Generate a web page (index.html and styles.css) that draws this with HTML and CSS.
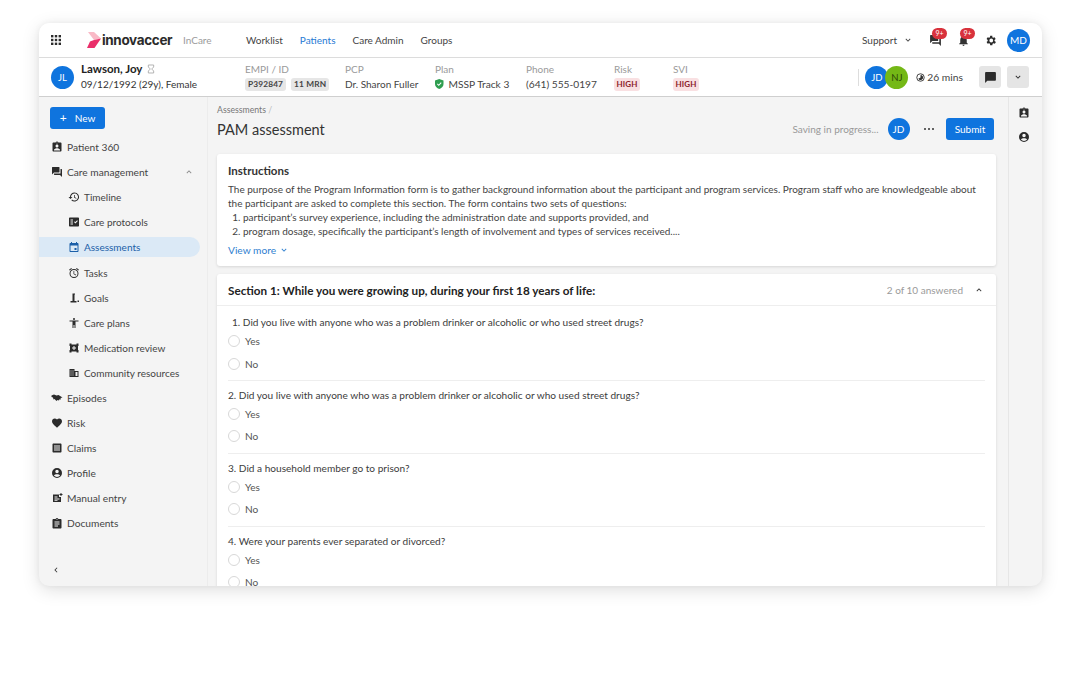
FILE: index.html
```html
<!DOCTYPE html>
<html lang="en">
<head>
<meta charset="utf-8">
<title>PAM assessment</title>
<link rel="stylesheet" href="styles.css">
</head>
<body>
<svg class="defs" width="0" height="0" aria-hidden="true">
  <symbol id="i-badge" viewBox="0 0 24 24"><path d="M19 3h-4.180C14.400 1.840 13.300 1 12 1c-1.300 0-2.400.84-2.820 2H5c-1.100 0-2 .9-2 2v14c0 1.100.9 2 2 2h14c1.100 0 2-.9 2-2V5c0-1.100-.9-2-2-2zm-7 0c.55 0 1 .45 1 1s-.45 1-1 1-1-.45-1-1 .45-1 1-1zm0 4c1.660 0 3 1.340 3 3s-1.340 3-3 3-3-1.340-3-3 1.340-3 3-3zm6 12H6v-1.400c0-2 4-3.100 6-3.100s6 1.100 6 3.100V19z"/></symbol>
  <symbol id="i-chat" viewBox="0 0 24 24"><path d="M21 6h-2v9H6v2c0 .6.4 1 1 1h11l4 4V7c0-.6-.4-1-1-1zm-4 6V3c0-.6-.4-1-1-1H3c-.6 0-1 .4-1 1v14l4-4h10c.6 0 1-.4 1-1z"/></symbol>
  <symbol id="i-comment" viewBox="0 0 24 24"><path d="M20 2H4c-1.100 0-2 .9-2 2v18l4-4h14c1.100 0 2-.9 2-2V4c0-1.100-.9-2-2-2z"/></symbol>
  <symbol id="i-history" viewBox="0 0 24 24"><path d="M13 3a9 9 0 0 0-9 9H1l3.900 3.900L9 12H6a7 7 0 1 1 2.050 4.950l-1.420 1.420A9 9 0 1 0 13 3zm-1 5v5l4.300 2.500.7-1.200-3.500-2.100V8H12z"/></symbol>
  <symbol id="i-protocol" viewBox="0 0 24 24"><path d="M20 3H4c-1.100 0-2 .9-2 2v14c0 1.100.9 2 2 2h16c1.100 0 2-.9 2-2V5c0-1.100-.9-2-2-2zM10 17H5v-2h5v2zm0-4H5v-2h5v2zm0-4H5V7h5v2zm4.800 6L12 12.200l1.400-1.400 1.400 1.400 3.500-3.500 1.400 1.400-4.900 4.900z"/></symbol>
  <symbol id="i-cal" viewBox="0 0 24 24"><path d="M19 4h-1V2h-2v2H8V2H6v2H5c-1.100 0-2 .9-2 2v14c0 1.100.9 2 2 2h14c1.100 0 2-.9 2-2V6c0-1.100-.9-2-2-2zm0 16H5V9h14v11zm-6-6h4v4h-4v-4z"/></symbol>
  <symbol id="i-alarm" viewBox="0 0 24 24"><path d="M22 5.700l-4.600-3.900-1.300 1.500 4.600 3.900L22 5.700zM7.900 3.400L6.600 1.900 2 5.700l1.300 1.500 4.600-3.800zM12.500 8H11v6l4.700 2.900.8-1.200-4-2.400V8zM12 4a9 9 0 1 0 0 18 9 9 0 0 0 0-18zm0 16a7 7 0 1 1 0-14 7 7 0 0 1 0 14z"/></symbol>
  <symbol id="i-goal" viewBox="0 0 24 24"><path d="M9 3h5v2h-1v13h4v3H5v-3h4V3zM19 17h3v3h-3z"/></symbol>
  <symbol id="i-body" viewBox="0 0 24 24"><path d="M12 2a2 2 0 1 1 0 4 2 2 0 0 1 0-4zm9 7h-6v13h-2v-6h-2v6H9V9H3V7h18v2z"/></symbol>
  <symbol id="i-med" viewBox="0 0 24 24"><path fill-rule="evenodd" d="M3 3h4v2h10V3h4v5h-1v8h1v5h-4v-2H7v2H3v-5h1V8H3zM11 8v3H8v2h3v3h2v-3h3v-2h-3V8z"/></symbol>
  <symbol id="i-build" viewBox="0 0 24 24"><path d="M3 4h10v4h8v12H3V4zm2 3v2h2V7H5zm4 0v2h2V7H9zm-4 4v2h2v-2H5zm4 0v2h2v-2H9zm-4 4v2h2v-2H5zm4 0v2h2v-2H9zm6-5v8h4v-8h-4z"/></symbol>
  <symbol id="i-hands" viewBox="0 0 24 24"><path d="M1 7l5-2 5 2 4-1 8 5-4 1 1 3-3-.5-1 2.500-3-1-2 2-4-4-2 1-1-4-3-1z"/></symbol>
  <symbol id="i-heart" viewBox="0 0 24 24"><path d="M12 21.300l-1.500-1.300C5.400 15.400 2 12.300 2 8.500 2 5.400 4.400 3 7.500 3c1.700 0 3.400.8 4.500 2.100C13.100 3.800 14.800 3 16.500 3 19.600 3 22 5.400 22 8.500c0 3.800-3.400 6.900-8.500 11.500L12 21.300z"/></symbol>
  <symbol id="i-list" viewBox="0 0 24 24"><path d="M19 3H5c-1.100 0-2 .9-2 2v14c0 1.100.9 2 2 2h14c1.100 0 2-.9 2-2V5c0-1.100-.9-2-2-2zM6 7h12v2H6V7zm0 4h12v2H6v-2zm0 4h12v2H6v-2z"/></symbol>
  <symbol id="i-person" viewBox="0 0 24 24"><path d="M12 2a10 10 0 1 0 0 20 10 10 0 0 0 0-20zm0 3.500a3.500 3.500 0 1 1 0 7 3.500 3.500 0 0 1 0-7zm0 14.500a8 8 0 0 1-6.200-3c.7-1.600 4-2.500 6.200-2.500s5.500.9 6.200 2.500A8 8 0 0 1 12 20z"/></symbol>
  <symbol id="i-entry" viewBox="0 0 24 24"><path d="M4 5h12v5h4v10H4V5zm3 4v2h6V9H7zm0 4v2h10v-2H7zm0 3.500V18h6v-1.500H7zM19 2h2v2h2v2h-2v2h-2V6h-2V4h2V2z"/></symbol>
  <symbol id="i-doc" viewBox="0 0 24 24"><path d="M19 4h-4.200a3 3 0 0 0-5.600 0H5c-1.100 0-2 .9-2 2v15c0 1.100.9 2 2 2h14c1.100 0 2-.9 2-2V6c0-1.100-.9-2-2-2zm-7-.5a1 1 0 1 1 0 2 1 1 0 0 1 0-2zM7 9h10v2H7V9zm0 4h10v2H7v-2zm0 4h7v2H7v-2z"/></symbol>
  <symbol id="i-up" viewBox="0 0 24 24"><path d="M12 8l6 6-1.400 1.400L12 10.800l-4.600 4.600L6 14z"/></symbol>
  <symbol id="i-down" viewBox="0 0 24 24"><path d="M12 16l-6-6 1.400-1.400L12 13.200l4.600-4.600L18 10z"/></symbol>
</svg>

<div class="app">
  <header class="topbar">
    <svg class="grid-icon" viewBox="0 0 10 10" aria-hidden="true"><g><rect x="0" y="0" width="2.400" height="2.400"/><rect x="3.800" y="0" width="2.400" height="2.400"/><rect x="7.600" y="0" width="2.400" height="2.400"/><rect x="0" y="3.800" width="2.400" height="2.400"/><rect x="3.800" y="3.800" width="2.400" height="2.400"/><rect x="7.600" y="3.800" width="2.400" height="2.400"/><rect x="0" y="7.600" width="2.400" height="2.400"/><rect x="3.800" y="7.600" width="2.400" height="2.400"/><rect x="7.600" y="7.600" width="2.400" height="2.400"/></g></svg>
    <svg class="logo-mark" viewBox="0 0 14 16" aria-hidden="true"><path fill="#f9b9c6" d="M1 0h6l7 6.500-7 1.500z"/><path fill="#ea2f6a" d="M14 6.500L7.500 16H0l3-6.500 4-1.500z"/></svg>
    <span class="logo-word">innovaccer</span>
    <span class="product">InCare</span>
    <nav class="mainnav">
      <a>Worklist</a><a class="on">Patients</a><a>Care Admin</a><a>Groups</a>
    </nav>
    <div class="top-right">
      <span class="support">Support</span>
      <svg class="ic10 chev-support"><use href="#i-down"/></svg>
      <span class="notif"><svg class="ic13"><use href="#i-chat"/></svg><b class="count">9+</b></span>
      <span class="notif bell"><svg class="ic13" viewBox="0 0 24 24"><path d="M12 22a2 2 0 0 0 2-2h-4a2 2 0 0 0 2 2zm6-6v-5c0-3.100-1.600-5.600-4.500-6.300V4a1.500 1.500 0 0 0-3 0v.7C7.600 5.400 6 7.900 6 11v5l-2 2v1h16v-1l-2-2z"/></svg><b class="count">9+</b></span>
      <svg class="ic13 gear" viewBox="0 0 24 24"><path d="M19.400 13a7.500 7.500 0 0 0 0-2l2.100-1.600-2-3.500-2.500 1a7.500 7.500 0 0 0-1.700-1L15.400 3.300h-4l-.4 2.600a7.500 7.500 0 0 0-1.700 1l-2.500-1-2 3.500L6.900 11a7.500 7.500 0 0 0 0 2l-2.100 1.600 2 3.500 2.500-1a7.500 7.500 0 0 0 1.700 1l.4 2.600h4l.4-2.600a7.500 7.500 0 0 0 1.700-1l2.500 1 2-3.500L19.400 13zM13.400 15.500a3.500 3.500 0 1 1 0-7 3.500 3.500 0 0 1 0 7z"/></svg>
      <span class="avatar blue big">MD</span>
    </div>
  </header>

  <section class="patient">
    <span class="avatar blue pt">JL</span>
    <div class="who">
      <div class="name">Lawson, Joy <svg class="hour" viewBox="0 0 12 14"><path fill="none" stroke="#a8a8a8" stroke-width="1.300" d="M2 1h8v3L7 7l3 3v3H2v-3l3-3-3-3z"/></svg></div>
      <div class="dob">09/12/1992 (29y), Female</div>
    </div>
    <div class="meta m-empi"><span class="lbl">EMPI / ID</span><div class="val"><span class="chip">P392847</span><span class="chip">11 MRN</span></div></div>
    <div class="meta m-pcp"><span class="lbl">PCP</span><div class="val">Dr. Sharon Fuller</div></div>
    <div class="meta m-plan"><span class="lbl">Plan</span><div class="val"><svg class="shield" viewBox="0 0 12 14"><path fill="#2f9e50" d="M6 0l6 2.200V7c0 3.500-2.500 5.800-6 7-3.500-1.200-6-3.500-6-7V2.200z"/><path fill="none" stroke="#fff" stroke-width="1.500" d="M3.300 6.800l2 2 3.500-3.600"/></svg>MSSP Track 3</div></div>
    <div class="meta m-phone"><span class="lbl">Phone</span><div class="val">(641) 555-0197</div></div>
    <div class="meta m-risk"><span class="lbl">Risk</span><div class="val"><span class="chip high">HIGH</span></div></div>
    <div class="meta m-svi"><span class="lbl">SVI</span><div class="val"><span class="chip high">HIGH</span></div></div>
    <div class="pt-right">
      <span class="vline"></span>
      <span class="avatar blue pair">JD</span>
      <span class="avatar green pair second">NJ</span>
      <svg class="timer" viewBox="0 0 12 12"><circle cx="6" cy="6" r="5" fill="none" stroke="#333" stroke-width="1.200"/><path fill="#333" d="M6 2.500a3.500 3.500 0 1 1-3 5.300L6 6z"/></svg>
      <span class="mins">26 mins</span>
      <span class="square-btn first"><svg class="ic13"><use href="#i-comment"/></svg></span>
      <span class="square-btn"><svg class="ic10"><use href="#i-down"/></svg></span>
    </div>
  </section>

  <div class="body">
    <aside class="side">
      <button class="new"><span class="plus">+</span>New</button>
      <ul class="menu">
        <li><svg class="ic12"><use href="#i-badge"/></svg>Patient 360</li>
        <li><svg class="ic12"><use href="#i-chat"/></svg>Care management<svg class="ic10 caret"><use href="#i-up"/></svg></li>
        <li class="sub"><svg class="ic12"><use href="#i-history"/></svg>Timeline</li>
        <li class="sub"><svg class="ic12"><use href="#i-protocol"/></svg>Care protocols</li>
        <li class="sub active"><svg class="ic12"><use href="#i-cal"/></svg>Assessments</li>
        <li class="sub"><svg class="ic12"><use href="#i-alarm"/></svg>Tasks</li>
        <li class="sub"><svg class="ic12"><use href="#i-goal"/></svg>Goals</li>
        <li class="sub"><svg class="ic12"><use href="#i-body"/></svg>Care plans</li>
        <li class="sub"><svg class="ic12"><use href="#i-med"/></svg>Medication review</li>
        <li class="sub"><svg class="ic12"><use href="#i-build"/></svg>Community resources</li>
        <li><svg class="ic12"><use href="#i-hands"/></svg>Episodes</li>
        <li><svg class="ic12"><use href="#i-heart"/></svg>Risk</li>
        <li><svg class="ic12"><use href="#i-list"/></svg>Claims</li>
        <li><svg class="ic12"><use href="#i-person"/></svg>Profile</li>
        <li><svg class="ic12"><use href="#i-entry"/></svg>Manual entry</li>
        <li><svg class="ic12"><use href="#i-doc"/></svg>Documents</li>
      </ul>
      <svg class="ic10 collapse" viewBox="0 0 24 24"><path d="M15.400 7.400L14 6l-6 6 6 6 1.400-1.400L10.800 12z"/></svg>
    </aside>

    <main class="main">
      <div class="crumb">Assessments <span class="slash">/</span></div>
      <div class="title-row">
        <h1>PAM assessment</h1>
        <div class="actions">
          <span class="saving">Saving in progress...</span>
          <span class="avatar blue act">JD</span>
          <span class="dots"><i></i><i></i><i></i></span>
          <button class="submit">Submit</button>
        </div>
      </div>

      <section class="card instr">
        <h2>Instructions</h2>
        <p>The purpose of the Program Information form is to gather background information about the participant and program services. Program staff who are knowledgeable about the participant are asked to complete this section. The form contains two sets of questions:</p>
        <ol>
          <li>participant’s survey experience, including the administration date and supports provided, and</li>
          <li>program dosage, specifically the participant’s length of involvement and types of services received....</li>
        </ol>
        <a class="more">View more <svg class="ic10"><use href="#i-down"/></svg></a>
      </section>

      <section class="card form">
        <div class="sec-head">
          <h3>Section 1: While you were growing up, during your first 18 years of life:</h3>
          <span class="answered">2 of 10 answered</span>
          <svg class="ic10 sec-caret"><use href="#i-up"/></svg>
        </div>
        <div class="q first-q">
          <div class="qt indent">1. Did you live with anyone who was a problem drinker or alcoholic or who used street drugs?</div>
          <label class="opt"><i class="radio"></i>Yes</label>
          <label class="opt"><i class="radio"></i>No</label>
        </div>
        <div class="q">
          <div class="qt">2. Did you live with anyone who was a problem drinker or alcoholic or who used street drugs?</div>
          <label class="opt"><i class="radio"></i>Yes</label>
          <label class="opt"><i class="radio"></i>No</label>
        </div>
        <div class="q">
          <div class="qt">3. Did a household member go to prison?</div>
          <label class="opt"><i class="radio"></i>Yes</label>
          <label class="opt"><i class="radio"></i>No</label>
        </div>
        <div class="q">
          <div class="qt">4. Were your parents ever separated or divorced?</div>
          <label class="opt"><i class="radio"></i>Yes</label>
          <label class="opt"><i class="radio"></i>No</label>
        </div>
      </section>
    </main>

    <aside class="rail">
      <svg class="ic12"><use href="#i-badge"/></svg>
      <svg class="ic12"><use href="#i-person"/></svg>
    </aside>
  </div>
</div>
</body>
</html>
```
FILE: styles.css
```css
* { box-sizing: border-box; }
html, body { margin: 0; height: 100%; background: #fff; overflow: hidden; }
body { padding: 23px 38px 0 39px; font-family: "Lato", "Noto Sans", sans-serif; font-size: 11px; color: #3c3c3c; }
.defs { position: absolute; }
svg { fill: currentColor; flex: none; display: block; }
.ic10 { width: 10px; height: 10px; }
.ic12 { width: 12px; height: 12px; }
.ic13 { width: 13px; height: 13px; }

.app { height: 563px; border-radius: 10px; overflow: hidden; display: flex; flex-direction: column; background: #f4f4f4; box-shadow: 0 4px 18px rgba(0,0,0,.13), 0 0 6px rgba(0,0,0,.05); }

.topbar { height: 35px; background: #fff; border-bottom: 1px solid #dcdcdc; display: flex; align-items: center; padding-left: 12px; flex: none; }
.grid-icon { width: 10px; height: 10px; fill: #2b2b2b; }
.logo-mark { width: 14px; height: 16px; margin-left: 26px; }
.logo-word { font-family: "Inter", sans-serif; font-weight: 700; font-size: 13.500px; letter-spacing: -.35px; color: #2b2b2b; margin-left: 1px; width: 71px; }
.product { margin-left: 10px; color: #9b9b9b; font-size: 10px; width: 52px; }
.mainnav { display: flex; gap: 17px; font-size: 10px; margin-left: 11px; }
.mainnav a { color: #444; }
.mainnav .on { color: #1f7ad4; }
.top-right { margin-left: auto; display: flex; align-items: center; padding-right: 12px; }
.support { font-size: 10px; color: #444; }
.chev-support { margin-left: 6px; color: #444; }
.notif { position: relative; margin-left: 16px; color: #333; }
.notif.bell { margin-left: 15px; }
.count { position: absolute; left: 3px; top: -6px; min-width: 15px; height: 11px; padding: 0 2px; border-radius: 6px; background: #d8323c; color: #fff; font-size: 7px; font-weight: 400; line-height: 11px; text-align: center; }
.gear { margin-left: 14px; color: #2b2b2b; }
.avatar { border-radius: 50%; display: inline-flex; align-items: center; justify-content: center; color: #fff; flex: none; }
.blue { background: #0f74de; }
.green { background: #74b816; color: #2d4a08; }
.big { width: 23px; height: 23px; margin-left: 10px; font-size: 10px; }

.patient { height: 39px; background: #fff; border-bottom: 1px solid #cfcfcf; display: flex; align-items: center; padding-left: 12px; flex: none; position: relative; }
.pt { width: 23px; height: 23px; font-size: 9.500px; }
.who { margin-left: 7px; width: 164px; }
.name { font-size: 11.500px; font-weight: 700; color: #222; display: flex; align-items: center; gap: 5px; line-height: 14px; }
.hour { width: 8px; height: 10px; }
.dob { font-size: 10px; color: #333; line-height: 15px; margin-top: 1px; }
.meta { display: flex; flex-direction: column; gap: 1px; }
.lbl { font-size: 10px; color: #9a9a9a; line-height: 13px; }
.val { font-size: 10px; color: #444; display: flex; align-items: center; gap: 5px; height: 14px; }
.m-empi { width: 100px; }
.m-pcp { width: 90px; }
.m-plan { width: 91px; }
.m-plan .val, .m-phone .val { font-size: 10.200px; }
.m-phone { width: 88px; }
.m-risk { width: 59px; }
.chip { background: #e6e6e6; border-radius: 3px; padding: 0 3px; font-size: 8.300px; font-weight: 700; color: #444; line-height: 13px; letter-spacing: .15px; }
.chip.high { background: #f9e0e2; color: #8c1d2b; font-size: 8px; padding: 0 2.500px; }
.shield { width: 8.500px; height: 10px; }
.pt-right { margin-left: auto; display: flex; align-items: center; padding-right: 13px; }
.vline { width: 1px; height: 17px; background: #ddd; margin-right: 6px; }
.pair { width: 23px; height: 23px; font-size: 9.500px; }
.second { margin-left: -3px; }
.timer { width: 9px; height: 9px; margin-left: 8px; }
.mins { margin-left: 2px; font-size: 10.300px; color: #444; }
.square-btn { width: 22px; height: 22px; border-radius: 3px; background: #e5e5e5; display: flex; align-items: center; justify-content: center; margin-left: 6px; color: #2b2b2b; }
.square-btn.first { margin-left: 16px; }

.body { flex: 1; min-height: 0; display: flex; }
.side { width: 169px; flex: none; position: relative; padding-top: 10px; border-right: 1px solid #ececec; }
.new { display: flex; align-items: center; justify-content: center; width: 55px; height: 22px; margin-left: 11px; border: 0; border-radius: 3px; background: #0f74de; color: #fff; font: 10px "Lato", sans-serif; padding: 0; }
.plus { margin-right: 8px; font-size: 12px; line-height: 1; }
.menu { list-style: none; margin: 5px 0 0; padding: 0; }
.menu li { height: 25px; display: flex; align-items: center; padding-left: 12px; gap: 4px; color: #444; font-size: 10.200px; }
.menu li svg:first-child { color: #2b2b2b; }
.menu .sub { padding-left: 29px; font-size: 10px; }
.menu .active { background: #dbe9f6; color: #1b5fa8; width: 161px; height: 20px; margin: 3px 0; border-radius: 0 10px 10px 0; }
.menu .active svg:first-child { color: #1b5fa8; }
.caret { margin-left: 32px; color: #8a8a8a; }
.collapse { position: absolute; left: 12px; bottom: 11px; color: #333; }

.main { flex: 1; min-width: 0; padding: 7px 12px 0 9px; overflow: hidden; }
.crumb { font-size: 8.700px; color: #777; line-height: 11px; }
.slash { color: #bbb; }
.title-row { display: flex; align-items: center; justify-content: space-between; margin-top: 2px; height: 24px; padding-right: 2px; }
h1 { margin: 0; font-size: 14.500px; font-weight: 400; color: #333; }
.actions { display: flex; align-items: center; }
.saving { color: #999; font-size: 10px; }
.act { width: 22px; height: 22px; margin-left: 9px; font-size: 10px; }
.dots { display: flex; gap: 1.500px; margin-left: 14px; }
.dots i { width: 2.500px; height: 2.500px; border-radius: 50%; background: #333; }
.submit { margin-left: 12px; width: 48px; height: 22px; border: 0; border-radius: 3px; background: #0f74de; color: #fff; font: 10px "Lato", sans-serif; padding: 0; }

.card { background: #fff; border-radius: 3px; box-shadow: 0 1px 3px rgba(0,0,0,.12); }
.instr { height: 112px; margin-top: 13px; padding: 9px 11px 0; }
h2 { margin: 0; font-size: 11.500px; font-weight: 700; color: #333; line-height: 15px; }
.instr p { margin: 4px 0 0; font-size: 10px; line-height: 14px; color: #444; }
.instr ol { margin: 0; padding: 0 0 0 15px; font-size: 10px; line-height: 14px; color: #444; }
.more { display: flex; align-items: center; gap: 3px; margin-top: 6px; color: #2f80d0; font-size: 10.200px; }
.form { margin-top: 8px; height: 320px; overflow: hidden; }
.sec-head { height: 32px; display: flex; align-items: center; padding: 0 12px 0 11px; border-bottom: 1px solid #eee; }
h3 { margin: 0; flex: 1; font-size: 11.700px; font-weight: 700; color: #222; }
.answered { color: #9a9a9a; font-size: 10px; }
.sec-caret { margin-left: 11px; color: #333; }
.q { margin: 0 11px; height: 73px; padding-top: 7px; border-bottom: 1px solid #eee; }
.first-q { height: 75px; padding-top: 9px; }
.first-q .opt:last-child { position: relative; top: 1px; }
.q:last-child { border-bottom: 0; }
.qt { font-size: 10.100px; line-height: 14px; color: #3c3c3c; }
.indent { padding-left: 4px; }
.opt { display: flex; align-items: center; gap: 5px; height: 22px; font-size: 10.100px; color: #555; }
.qt + .opt { margin-top: 1px; }
.radio { width: 12px; height: 12px; border-radius: 50%; border: 1px solid #d8d8d8; background: #fff; }

.rail { width: 34px; flex: none; display: flex; flex-direction: column; align-items: center; gap: 12px; padding: 10px 4px 0 0; border-left: 1px solid #e6e6e6; color: #2b2b2b; }
```
